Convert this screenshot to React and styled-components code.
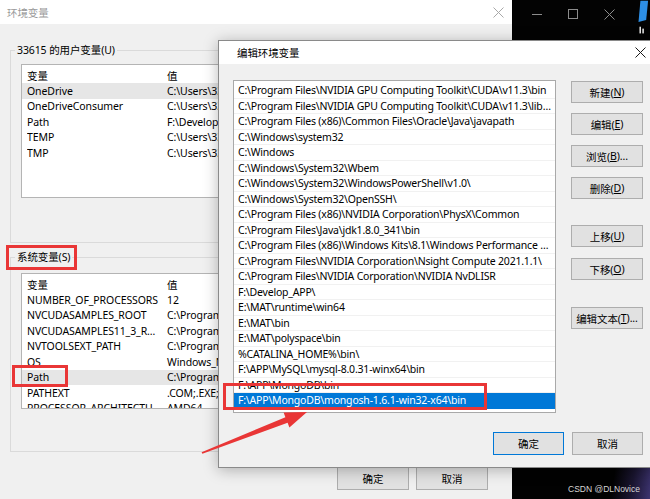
import React from 'react';
import styled, { createGlobalStyle } from 'styled-components';

const FONT = `"Noto Sans", "Noto Sans CJK SC", sans-serif`;
const PANEL = '#f0f0f0';
const SELECT_BLUE = '#0078d7';
const ANNOT_RED = '#e93636';
const ROW_H = 15.5;

const GlobalStyle = createGlobalStyle`
  html, body {
    margin: 0;
    padding: 0;
    background: #000;
  }
  body {
    font-family: ${FONT};
    font-size: 10.5px;
    letter-spacing: -0.1px;
    color: #000;
  }
  * {
    box-sizing: border-box;
  }
`;

const Desktop = styled.div`
  position: relative;
  width: 650px;
  height: 499px;
  overflow: hidden;
  background: #000;
`;

/* ---------- windows ---------- */

const Window = styled.div`
  position: absolute;
  left: ${(p) => p.$x}px;
  top: ${(p) => p.$y}px;
  width: ${(p) => p.$w}px;
  height: ${(p) => p.$h}px;
  display: flex;
  flex-direction: column;
  background: ${PANEL};
  border: ${(p) => (p.$framed ? '1px solid #8a8a8a' : 'none')};
  box-shadow: ${(p) => (p.$framed ? '0 2px 14px rgba(0, 0, 0, 0.28)' : 'none')};
`;

const TitleBar = styled.div`
  flex: none;
  height: ${(p) => p.$h}px;
  display: flex;
  align-items: center;
  justify-content: space-between;
  padding-left: ${(p) => p.$pad}px;
  background: #fff;
  color: ${(p) => (p.$inactive ? '#9a9a9a' : '#000')};
`;

const CloseBox = styled.div`
  width: 24px;
  height: 100%;
  margin-right: ${(p) => p.$mr}px;
  display: flex;
  align-items: center;
  justify-content: center;
`;

const CloseIcon = ({ color }) => (
  <svg width="11" height="11" viewBox="0 0 11 11">
    <path d="M0.5 0.5L10.5 10.5M10.5 0.5L0.5 10.5" stroke={color} strokeWidth="1" fill="none" />
  </svg>
);

/* ---------- back dialog ---------- */

const BackBody = styled.div`
  flex: 1;
  display: flex;
  flex-direction: column;
  padding: 26px 10px 0 10px;
`;

const Group = styled.div`
  border: 1px solid #dadada;
  padding: 0 10px ${(p) => p.$padBottom}px 10px;
  margin-top: ${(p) => p.$top || 0}px;
`;

const GroupLabel = styled.div`
  width: fit-content;
  height: 16px;
  line-height: 16px;
  margin: -9px 0 0 -6px;
  padding: 0 2px;
  background: ${PANEL};
`;

const ListBox = styled.div`
  margin-top: ${(p) => p.$top || 0}px;
  width: ${(p) => (p.$w ? `${p.$w}px` : 'auto')};
  height: ${(p) => p.$h}px;
  flex: none;
  overflow: hidden;
  padding-top: 2px;
  background: #fff;
  border: 1px solid ${(p) => p.$border || '#b4b4b4'};
`;

const VarRow = styled.div`
  display: flex;
  align-items: center;
  height: ${(p) => (p.$header ? 16 : ROW_H)}px;
  padding-left: 5px;
  white-space: nowrap;
  background: ${(p) => (p.$hl ? '#e6e6e6' : 'transparent')};
`;

const NameCell = styled.span`
  flex: none;
  width: 140px;
  padding-right: 4px;
  overflow: hidden;
  text-overflow: ellipsis;
`;

const ValueCell = styled.span`
  flex: none;
`;

const BackFooter = styled.div`
  display: flex;
  justify-content: flex-end;
  gap: 7px;
  margin-top: 14px;
  padding-right: 14px;
`;

/* ---------- buttons ---------- */

const Button = styled.div`
  flex: none;
  width: ${(p) => p.$w || 72}px;
  height: ${(p) => p.$h || 22}px;
  margin-top: ${(p) => p.$top || 0}px;
  display: flex;
  align-items: center;
  justify-content: center;
  background: #e1e1e1;
  border: 1px solid ${(p) => (p.$default ? SELECT_BLUE : '#adadad')};
  color: #000;
  white-space: nowrap;
`;

const Key = styled.span`
  text-decoration: underline;
`;

/* ---------- front dialog ---------- */

const FrontBody = styled.div`
  flex: 1;
  display: flex;
  flex-direction: column;
  padding: 16px 10px 0 14px;
`;

const FrontMain = styled.div`
  display: flex;
  gap: 15px;
`;

const ButtonColumn = styled.div`
  display: flex;
  flex-direction: column;
  padding-top: 1px;
`;

const PathRow = styled.div`
  height: ${ROW_H}px;
  line-height: ${ROW_H}px;
  padding: 0 2px 0 4px;
  letter-spacing: -0.2px;
  white-space: nowrap;
  overflow: hidden;
  text-overflow: ellipsis;
  background: ${(p) => (p.$selected ? SELECT_BLUE : 'transparent')};
  color: ${(p) => (p.$selected ? '#fff' : '#000')};
  box-shadow: inset 0 -1px 0 ${(p) => (p.$selected ? SELECT_BLUE : '#f1f1f1')};
`;

const FrontFooter = styled.div`
  display: flex;
  justify-content: flex-end;
  gap: 8px;
  margin-top: 19px;
`;

/* ---------- other windows behind ---------- */

const DarkPane = styled.div`
  position: absolute;
  left: ${(p) => p.$x}px;
  top: ${(p) => p.$y}px;
  width: ${(p) => p.$w}px;
  height: ${(p) => p.$h}px;
  background: ${(p) => p.$bg || '#030303'};
  display: flex;
  align-items: ${(p) => p.$align || 'flex-start'};
  justify-content: ${(p) => p.$justify || 'flex-start'};
`;

const CaptionControls = styled.div`
  display: flex;
  margin: 0 0 0 6px;
  height: 28px;
`;

const CaptionBtn = styled.div`
  width: 36px;
  display: flex;
  align-items: center;
  justify-content: center;
`;

const Watermark = styled.div`
  font-family: "Liberation Sans", ${FONT};
  font-size: 8.5px;
  letter-spacing: 0;
  color: #d6d6d6;
  padding: 0 10px 5px 0;
`;

/* ---------- annotations ---------- */

const RedBox = styled.div`
  position: absolute;
  left: ${(p) => p.$x}px;
  top: ${(p) => p.$y}px;
  width: ${(p) => p.$w}px;
  height: ${(p) => p.$h}px;
  border: 3px solid ${ANNOT_RED};
  pointer-events: none;
`;

const Overlay = styled.svg`
  position: absolute;
  left: 0;
  top: 0;
  pointer-events: none;
`;

const userVars = [
  ['OneDrive', 'C:\\Users\\33615\\OneDrive', true],
  ['OneDriveConsumer', 'C:\\Users\\33615\\OneDrive'],
  ['Path', 'F:\\Develop_APP\\;C:\\Users\\33615\\AppData'],
  ['TEMP', 'C:\\Users\\33615\\AppData\\Local\\Temp'],
  ['TMP', 'C:\\Users\\33615\\AppData\\Local\\Temp'],
];

const systemVars = [
  ['NUMBER_OF_PROCESSORS', '12'],
  ['NVCUDASAMPLES_ROOT', 'C:\\ProgramData\\NVIDIA Corporation'],
  ['NVCUDASAMPLES11_3_ROOT', 'C:\\ProgramData\\NVIDIA Corporation'],
  ['NVTOOLSEXT_PATH', 'C:\\Program Files\\NVIDIA Corporation'],
  ['OS', 'Windows_NT'],
  ['Path', 'C:\\Program Files\\NVIDIA GPU Computing', true],
  ['PATHEXT', '.COM;.EXE;.BAT;.CMD;.VBS'],
  ['PROCESSOR_ARCHITECTURE', 'AMD64'],
];

const paths = [
  'C:\\Program Files\\NVIDIA GPU Computing Toolkit\\CUDA\\v11.3\\bin',
  'C:\\Program Files\\NVIDIA GPU Computing Toolkit\\CUDA\\v11.3\\libnvvp',
  'C:\\Program Files (x86)\\Common Files\\Oracle\\Java\\javapath',
  'C:\\Windows\\system32',
  'C:\\Windows',
  'C:\\Windows\\System32\\Wbem',
  'C:\\Windows\\System32\\WindowsPowerShell\\v1.0\\',
  'C:\\Windows\\System32\\OpenSSH\\',
  'C:\\Program Files (x86)\\NVIDIA Corporation\\PhysX\\Common',
  'C:\\Program Files\\Java\\jdk1.8.0_341\\bin',
  'C:\\Program Files (x86)\\Windows Kits\\8.1\\Windows Performance Toolkit\\',
  'C:\\Program Files\\NVIDIA Corporation\\Nsight Compute 2021.1.1\\',
  'C:\\Program Files\\NVIDIA Corporation\\NVIDIA NvDLISR',
  'F:\\Develop_APP\\',
  'E:\\MAT\\runtime\\win64',
  'E:\\MAT\\bin',
  'E:\\MAT\\polyspace\\bin',
  '%CATALINA_HOME%\\bin\\',
  'F:\\APP\\MySQL\\mysql-8.0.31-winx64\\bin',
  'F:\\APP\\MongoDB\\bin',
  'F:\\APP\\MongoDB\\mongosh-1.6.1-win32-x64\\bin',
];

const VarList = ({ rows, top, h }) => (
  <ListBox $top={top} $h={h}>
    <VarRow $header>
      <NameCell>变量</NameCell>
      <ValueCell>值</ValueCell>
    </VarRow>
    {rows.map(([name, value, hl]) => (
      <VarRow key={name} $hl={hl}>
        <NameCell>{name}</NameCell>
        <ValueCell>{value}</ValueCell>
      </VarRow>
    ))}
  </ListBox>
);

const App = () => {
  return (
    <Desktop>
      <GlobalStyle />

      {/* 环境变量 (behind) */}
      <Window $x={0} $y={0} $w={512} $h={520}>
        <TitleBar $h={24} $pad={7} $inactive>
          <span>环境变量</span>
          <CloseBox $mr={2}>
            <CloseIcon color="#a8a8a8" />
          </CloseBox>
        </TitleBar>
        <BackBody>
          <Group $padBottom={44}>
            <GroupLabel>33615 的用户变量(U)</GroupLabel>
            <VarList rows={userVars} top={6} h={134} />
          </Group>
          <Group $padBottom={42} $top={14}>
            <GroupLabel>系统变量(S)</GroupLabel>
            <VarList rows={systemVars} top={8} h={136} />
          </Group>
          <BackFooter>
            <Button $h={24}>确定</Button>
            <Button $h={24}>取消</Button>
          </BackFooter>
        </BackBody>
      </Window>

      {/* terminal window peeking in the top right */}
      <DarkPane $x={513} $y={0} $w={137} $h={40}>
        <CaptionControls>
          <CaptionBtn>
            <svg width="10" height="10" viewBox="0 0 10 10">
              <path d="M0 5.5H10" stroke="#8c8c8c" strokeWidth="1" />
            </svg>
          </CaptionBtn>
          <CaptionBtn>
            <svg width="10" height="10" viewBox="0 0 10 10">
              <rect x="0.5" y="0.5" width="9" height="9" stroke="#8c8c8c" fill="none" />
            </svg>
          </CaptionBtn>
          <CaptionBtn>
            <CloseIcon color="#8c8c8c" />
          </CaptionBtn>
        </CaptionControls>
        <svg width="24" height="40" viewBox="0 0 24 40">
          <path d="M14 0H22L20 20L12 22Z" fill="#2d8fe6" />
          <rect x="13" y="27" width="1.6" height="7" fill="#e6e6e6" />
          <rect x="16" y="29" width="1.6" height="5" fill="#e6e6e6" />
        </svg>
      </DarkPane>

      <DarkPane
        $x={512}
        $y={468}
        $w={138}
        $h={31}
        $bg="linear-gradient(100deg, #020202 72%, #1a1530 86%, #3d3470 100%)"
        $align="flex-end"
        $justify="flex-end"
      >
        <Watermark>CSDN @DLNovice</Watermark>
      </DarkPane>

      {/* 编辑环境变量 (front) */}
      <Window $x={218} $y={40} $w={436} $h={428} $framed>
        <TitleBar $h={23} $pad={18}>
          <span>编辑环境变量</span>
          <CloseBox $mr={1}>
            <CloseIcon color="#1a1a1a" />
          </CloseBox>
        </TitleBar>
        <FrontBody>
          <FrontMain>
            <ListBox $w={323} $h={333} $border="#a9a9a9">
              {paths.map((p, i) => (
                <PathRow key={p} $selected={i === paths.length - 1}>
                  {p}
                </PathRow>
              ))}
            </ListBox>
            <ButtonColumn>
              <Button>新建(<Key>N</Key>)</Button>
              <Button $top={10}>编辑(<Key>E</Key>)</Button>
              <Button $top={10}>浏览(<Key>B</Key>)...</Button>
              <Button $top={10}>删除(<Key>D</Key>)</Button>
              <Button $top={26}>上移(<Key>U</Key>)</Button>
              <Button $top={11}>下移(<Key>O</Key>)</Button>
              <Button $top={27}>编辑文本(<Key>T</Key>)...</Button>
            </ButtonColumn>
          </FrontMain>
          <FrontFooter>
            <Button $w={71} $h={23} $default>确定</Button>
            <Button $w={71} $h={23}>取消</Button>
          </FrontFooter>
        </FrontBody>
      </Window>

      {/* annotations */}
      <RedBox $x={6} $y={245} $w={71} $h={25} />
      <RedBox $x={12} $y={365} $w={56} $h={22} />
      <RedBox $x={223} $y={383} $w={264} $h={27} />
      <Overlay width="650" height="499" viewBox="0 0 650 499">
        <polygon
          points="201.6,452.2 285.4,417.2 283.6,412.6 307,412 289.4,427.4 287.6,422.8 202.4,453.8"
          fill={ANNOT_RED}
        />
      </Overlay>
    </Desktop>
  );
};

export default App;
